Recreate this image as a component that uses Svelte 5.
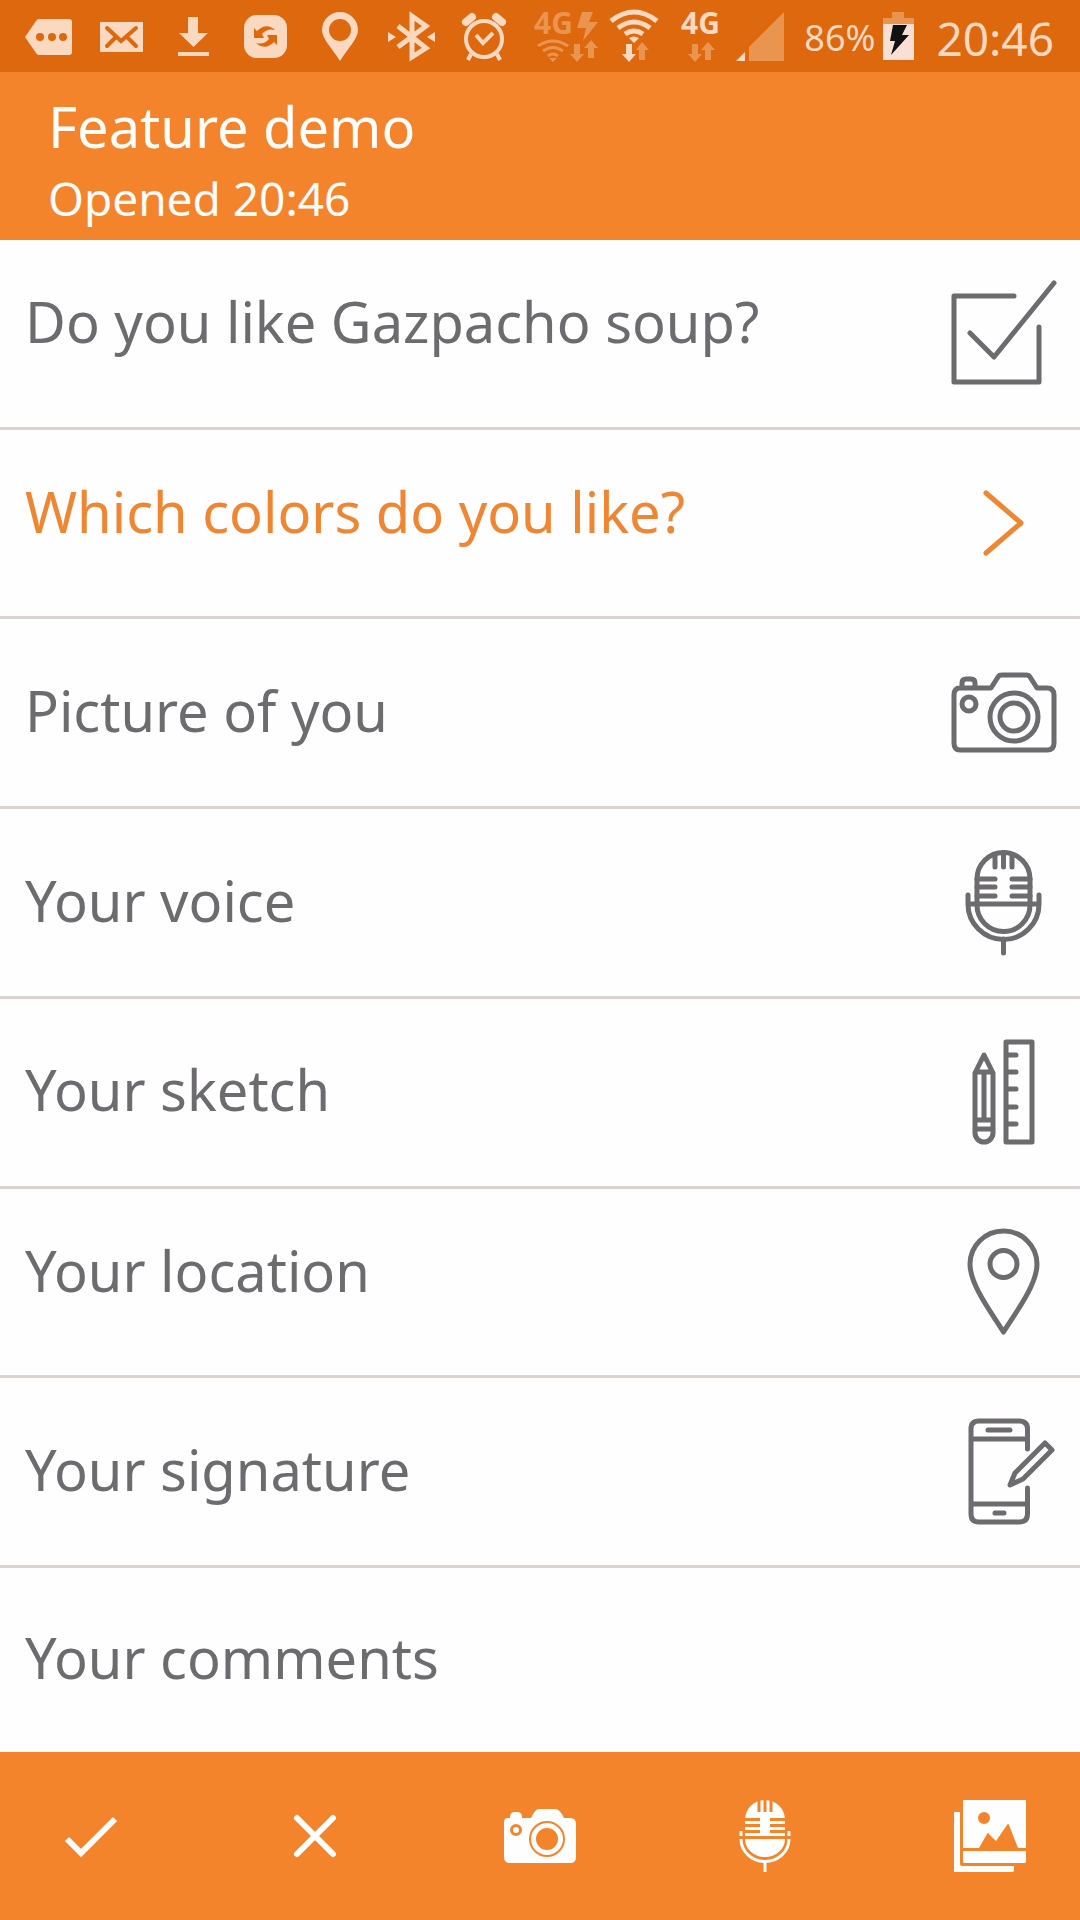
<script>
    const rows = [
        { label: 'Do you like Gazpacho soup?', icon: 'checkbox', raised: true },
        { label: 'Which colors do you like?', icon: 'chevron', raised: true, active: true },
        { label: 'Picture of you', icon: 'camera' },
        { label: 'Your voice', icon: 'mic' },
        { label: 'Your sketch', icon: 'sketch' },
        { label: 'Your location', icon: 'location', raised: true },
        { label: 'Your signature', icon: 'signature' },
        { label: 'Your comments', icon: null }
    ];
</script>

<div class="page">
    <div class="status">
        <div class="group">
            <svg width="72" height="72"><path class="light" d="M13 37 24 21q1-2 3-2h30q3 0 3 3v30q0 3-3 3H27q-2 0-3-2z"/><g class="dark"><circle cx="28" cy="37" r="4"/><circle cx="40" cy="37" r="4"/><circle cx="51" cy="37" r="4"/></g></svg>
            <svg width="72" height="72"><path class="light" d="M16 22h43v30H16z"/><path class="dark-line" d="M23 28 37 41 52 28M23 46l8-8M52 46l-8-8"/></svg>
            <svg width="72" height="72"><path class="light" d="M32 17h10v16h10L37.5 47 23 33h9zM22 52h31v4H22z"/></svg>
            <svg width="72" height="72"><rect class="light" x="16" y="15" width="43" height="43" rx="13"/><path class="dark" d="M26 28l3 3Q38 22 47 30Q39 28 34 34l2 4H26zM49 45l-3-3Q37 51 28 43Q36 45 41 39l-2-4L49 35z"/></svg>
            <svg width="72" height="72"><path class="light" fill-rule="evenodd" d="M40 12a18 18 0 0 1 18 18c0 9-10 18-18 31-8-13-18-22-18-31a18 18 0 0 1 18-18zm0 7a11 11 0 1 0 0 22 11 11 0 0 0 0-22z"/></svg>
            <svg width="72" height="72"><path class="light-line thick" d="M26 26 54 48 40 57V16L54 26 26 47"/><path class="light" d="M16 32v10l8-5zM63 32v10l-8-5z"/></svg>
            <svg width="72" height="72"><circle class="light-line" cx="40" cy="39" r="18"/><path class="light-line" d="M32 35l7 8 10-10M27 54l-3 6M53 54l3 6"/><path class="light-line bell" d="M22 22l6-5M52 17l6 5"/></svg>
            <svg width="88" height="72">
                <text class="faint" x="18" y="34">4G</text>
                <path class="faint" d="M66 12h11l-4 10h9L67 41l3-13h-9z"/>
                <path class="faint-line" d="M22 46Q37 36 52 46M27 51Q37 44 47 51M32 56Q37 52 42 56"/>
                <path class="faint" d="M33 58h8l-4 4zM58 44h6v10h4l-7 8-7-8h4zM72 58h6V48h4l-7-8-7 8h4z"/>
            </svg>
            <svg width="60" height="72">
                <path class="light-line thick" d="M7 21Q30 3 53 21M14 28Q30 16 46 28M21 34Q30 28 39 34"/>
                <path class="light" d="M25 38q5-3 10 0l-5 5zM22 44h6v10h4l-7 8-7-8h4z"/>
                <path class="faint" d="M35 60h6V50h4l-7-8-6 8h3z"/>
            </svg>
            <svg width="66" height="72"><text class="light" x="17" y="34">4G</text><path class="faint" d="M28 44h6v10h4l-7 8-7-8h4zM41 60h6V50h4l-7-8-7 8h4z"/></svg>
            <svg width="60" height="72"><path class="light" d="M6 61h9v-9z"/><path class="faint" d="M19 61h35V12L19 47z"/></svg>
        </div>
        <div class="group right">
            <span class="percent">86%</span>
            <svg width="31" height="72"><path class="faint" d="M9 12h12v6h10v6H0v-6h9z"/><path class="battery" d="M0 24h31v36H0z"/><path class="bolt" d="M10 25h14l-5 10h7L8 55l4-14H7z"/></svg>
            <span class="time">20:46</span>
        </div>
    </div>

    <header>
        <h1>Feature demo</h1>
        <p>Opened 20:46</p>
    </header>

    <ul>
        {#each rows as row}
            <li>
                <button class="row" class:raised={row.raised} class:active={row.active}>
                    <span>{row.label}</span>
                    {#if row.icon}
                        <svg class="icon" width="108" height="108" viewBox="0 0 108 108" aria-hidden="true">
                            {#if row.icon == 'checkbox'}
                                <path d="M64 17H4V103H89V48M20 54 44 78 104 4"/>
                            {:else if row.icon == 'chevron'}
                                <path d="M36 24 71 54 36 84"/>
                            {:else if row.icon == 'camera'}
                                <path d="M10 29H41L48 18Q49 16 52 16H76Q79 16 80 18L87 29H97Q104 29 104 36V84Q104 91 97 91H10Q4 91 4 84V36Q4 29 10 29zM12 29V24Q12 20 16 20H21Q25 20 25 24V29"/>
                                <circle cx="19" cy="45" r="7"/>
                                <circle cx="64" cy="58" r="24"/>
                                <circle cx="64" cy="58" r="14"/>
                            {:else if row.icon == 'mic'}
                                <path d="M27 30a26 26 0 0 1 53 0V56a26 26 0 0 1-53 0zM18 46V55a35 35 0 0 0 71 0V46M18 55H89M53.5 90v14"/>
                                <path d="M45 6v12M53.5 4v14M62 6v12M27 30h18M27 38h18M27 47h18M80 30H62M80 38H62M80 47H62"/>
                            {:else if row.icon == 'sketch'}
                                <path d="M34 17 25 35V95a9 9 0 0 0 18 0V35zM26 34H42M34 34V82M25 82H43M25 91H43"/>
                                <path d="M56 4H82V104H56zM56 17H66M56 34H66M56 51H66M56 69H66M56 86H66"/>
                            {:else if row.icon == 'location'}
                                <path d="M53.5 104C44 88 20 58 20 36a33.5 33 0 0 1 67 0C87 58 63 88 53.5 104z"/>
                                <circle cx="53.5" cy="36" r="13.5"/>
                            {:else if row.icon == 'signature'}
                                <path d="M77.5 31V11Q77.5 3 69 3H29Q21 3 21 11V96Q21 104 29 104H69Q77.5 104 77.5 96V70M21 21H77M21 86H77M38 12H60M45 95H54"/>
                                <path d="M60 67 65 55 95 25 102 32 73 61z"/>
                            {/if}
                        </svg>
                    {/if}
                </button>
            </li>
        {/each}
    </ul>

    <footer>
        <button aria-label="Accept">
            <svg width="72" height="72"><path class="tool-line" d="M13 39 27 53 61 19"/></svg>
        </button>
        <button aria-label="Cancel">
            <svg width="72" height="72"><path class="tool-line round" d="M18 18 54 54M54 18 18 54"/></svg>
        </button>
        <button aria-label="Camera">
            <svg width="72" height="72">
                <path d="M4 18H6Q6 12 10 12H14Q18 12 18 18H27Q31 9 35 9H51Q56 9 60 18H66Q72 18 72 24V57Q72 63 66 63H6Q0 63 0 57V22Q0 18 4 18z"/>
                <circle class="cut-line" cx="12" cy="30" r="4.5"/>
                <circle class="cut-line thin" cx="43" cy="39" r="17"/>
                <circle class="cut" cx="43" cy="39" r="11"/>
            </svg>
        </button>
        <button aria-label="Record voice">
            <svg width="72" height="72">
                <path d="M16 36V20a20 20 0 0 1 40 0V36zM16 39H56a20 18 0 0 1-40 0z"/>
                <path class="cut-line" d="M30 0V12M36 0V12M42 0V12M16 19.5H31M16 25.5H31M16 31.5H31M56 19.5H41M56 25.5H41M56 31.5H41"/>
                <path class="mic-line" d="M12 31V36M60 31V36M12 39a24 22.5 0 0 0 48 0M36 61V72"/>
            </svg>
        </button>
        <button aria-label="Gallery">
            <svg width="72" height="72">
                <path fill-rule="evenodd" d="M9 0H72V48H64L55 25Q54 23 53 25L42 41 35 34Q34 32 33 34L25 48H9zM30 12a6 6 0 1 0 0 12 6 6 0 0 0 0-12z"/>
                <path d="M9 51H72V62L71 63H10L9 62zM0 12H6V64Q6 66 8 66H60V71L59 72H0z"/>
            </svg>
        </button>
    </footer>
</div>

<style>
    :global(body) {
        margin: 0;
        background: #fefdff;
    }
    .page {
        display: flex;
        flex-direction: column;
        min-height: 100vh;
        font-family: 'Noto Sans', sans-serif;
        color: #6c6b6e;
    }
    svg {
        display: block;
        flex: none;
    }
    .status {
        display: flex;
        justify-content: space-between;
        height: 72px;
        padding: 0 26px 0 12px;
        background: #dd680d;
        color: #fbd8c0;
    }
    .group {
        display: flex;
        align-items: center;
    }
    .right {
        gap: 8px;
    }
    .percent {
        font-size: 36px;
        line-height: 40px;
        padding-top: 4px;
    }
    .time {
        font-size: 46px;
        line-height: 56px;
        padding-left: 14px;
        padding-top: 4px;
    }
    .status text {
        font-size: 30px;
        font-weight: 700;
    }
    .light { fill: #fbd8c0; }
    .faint { fill: #e9954f; }
    .dark { fill: #dd680d; }
    .battery { fill: #fae0d4; }
    .bolt { fill: #111; }
    .light-line, .faint-line, .dark-line {
        fill: none;
        stroke: #fbd8c0;
        stroke-width: 4px;
    }
    .faint-line {
        stroke: #e9954f;
        stroke-width: 3px;
    }
    .dark-line {
        stroke: #dd680d;
        stroke-linecap: round;
    }
    .thick { stroke-width: 5px; }
    .bell {
        stroke-width: 8px;
        stroke-linecap: round;
    }

    header {
        height: 168px;
        box-sizing: border-box;
        padding: 14px 48px 0;
        background: #f4842c;
        color: #fffdfb;
    }
    h1, p {
        margin: 0;
        font-weight: 400;
    }
    h1 {
        font-size: 56px;
        line-height: 80px;
    }
    p {
        font-size: 46px;
        line-height: 64px;
    }

    ul {
        display: flex;
        flex-direction: column;
        flex: 1;
        margin: 0;
        padding: 0;
        list-style: none;
    }
    li {
        display: flex;
        flex: 1 0 auto;
        border-bottom: 3px solid #dcd3d1;
    }
    li:last-child {
        flex: 0 0 184px;
        border-bottom: none;
    }
    button {
        border: none;
        padding: 0;
        background: none;
        color: inherit;
        font: inherit;
    }
    .row {
        display: flex;
        flex: 1;
        align-items: center;
        justify-content: space-between;
        padding: 0 22px 0 25px;
        font-size: 56px;
        line-height: 80px;
        text-align: left;
    }
    .row span {
        padding-bottom: 6px;
    }
    .raised span {
        padding-bottom: 24px;
    }
    .active {
        color: #ee8632;
    }
    .icon {
        fill: none;
        stroke: currentColor;
        stroke-width: 5px;
        stroke-linecap: round;
        stroke-linejoin: round;
    }

    footer {
        display: flex;
        justify-content: space-between;
        align-items: center;
        height: 168px;
        padding: 0 54px;
        background: #f4842c;
    }
    footer svg {
        fill: #fffefe;
    }
    footer .tool-line, footer .mic-line {
        fill: none;
        stroke: #fffefe;
        stroke-width: 6px;
    }
    footer .mic-line { stroke-width: 3px; }
    .round { stroke-linecap: round; }
    .cut { fill: #f4842c; }
    .cut-line {
        fill: none;
        stroke: #f4842c;
        stroke-width: 3px;
    }
    .thin { stroke-width: 2px; }
</style>
